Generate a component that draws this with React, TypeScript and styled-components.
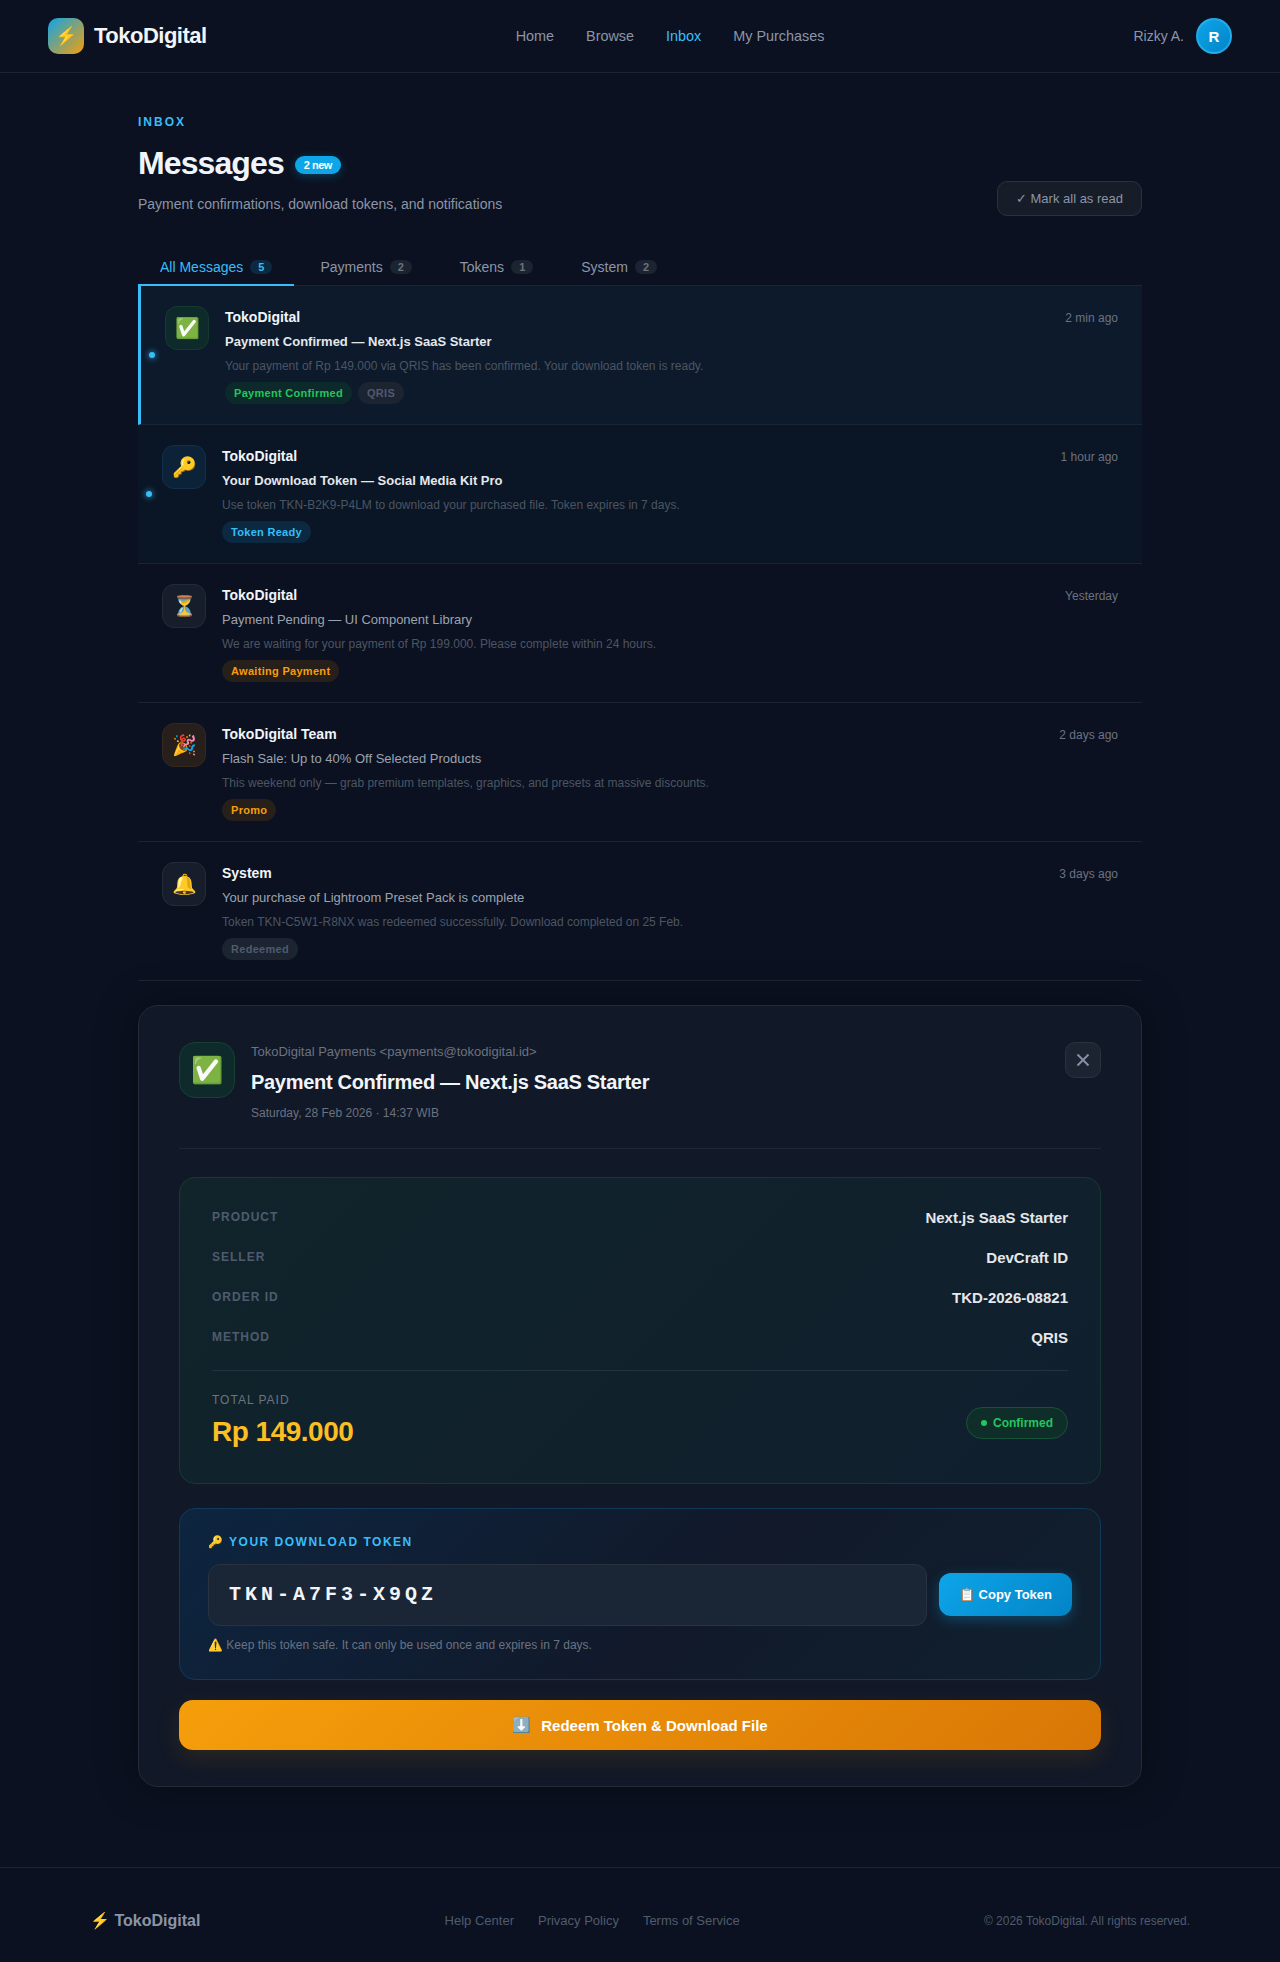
import React from "react";
import styled, { createGlobalStyle } from "styled-components";

const GlobalStyle = createGlobalStyle`
  * { box-sizing: border-box; }
  html, body { margin: 0; padding: 0; background: #0b1120; }
  body { font-family: "Liberation Sans", Arial, sans-serif; color: #f1f5f9; }
`;

const Page = styled.div`
  min-height: 1962px;
  background: #0b1120;
`;

const Nav = styled.nav`
  height: 73px;
  padding: 0 48px;
  display: flex;
  align-items: center;
  justify-content: space-between;
  border-bottom: 1px solid #1c2331;
`;

const Brand = styled.div`
  display: flex;
  align-items: center;
  gap: 10px;
  font-size: 22px;
  font-weight: 700;
  letter-spacing: -0.5px;
  color: #f1f5f9;
`;

const LogoMark = styled.div`
  width: 36px;
  height: 36px;
  border-radius: 10px;
  background: linear-gradient(135deg, #0ea5e9, #f59e0b);
  display: flex;
  align-items: center;
  justify-content: center;
  font-size: 18px;
`;

const NavLinks = styled.div`
  display: flex;
  gap: 32px;
`;

const NavLink = styled.a<{ $active?: boolean }>`
  font-size: 14.4px;
  color: ${({ $active }) => ($active ? "#38bdf8" : "#8b95a7")};
`;

const UserBox = styled.div`
  display: flex;
  align-items: center;
  gap: 12px;
  font-size: 14px;
  color: #8b95a7;
`;

const Avatar = styled.div`
  width: 36px;
  height: 36px;
  border-radius: 50%;
  background: linear-gradient(135deg, #0ea5e9, #0284c7);
  border: 2px solid rgba(56, 189, 248, 0.55);
  color: #fff;
  display: flex;
  align-items: center;
  justify-content: center;
  font-size: 15px;
  font-weight: 700;
`;

const Main = styled.main`
  width: 1004px;
  margin: 0 auto;
  padding-top: 42px;
`;

const Eyebrow = styled.div`
  font-size: 12px;
  line-height: 14px;
  font-weight: 700;
  letter-spacing: 2px;
  color: #38bdf8;
`;

const HeaderRow = styled.div`
  display: flex;
  align-items: flex-end;
  justify-content: space-between;
  margin-top: 14px;
`;

const TitleRow = styled.div`
  display: flex;
  align-items: center;
  gap: 11px;
`;

const Title = styled.h1`
  margin: 0;
  font-size: 32px;
  line-height: 41px;
  font-weight: 700;
  letter-spacing: -0.9px;
  color: #f1f5f9;
`;

const NewBadge = styled.span`
  height: 18px;
  padding: 0 9px;
  border-radius: 10px;
  background: #0ea5e9;
  box-shadow: 0 2px 10px rgba(14, 165, 233, 0.3);
  color: #fff;
  font-size: 11px;
  line-height: 18px;
  font-weight: 700;
  letter-spacing: -0.5px;
  margin-top: 3px;
`;

const Subtitle = styled.p`
  margin: 10px 0 0;
  font-size: 14px;
  line-height: 20px;
  color: #8b95a7;
`;

const MarkButton = styled.button`
  height: 35px;
  padding: 0 18px;
  border-radius: 10px;
  border: 1px solid #2a3240;
  background: #161c28;
  color: #8b95a7;
  font-family: inherit;
  font-size: 13px;
  margin-bottom: -2px;
`;

const Tabs = styled.div`
  display: flex;
  gap: 4px;
  margin-top: 33px;
  border-bottom: 1px solid #1c2331;
  height: 39px;
`;

const Tab = styled.div<{ $active?: boolean }>`
  height: 39px;
  padding: 2px 22px 0;
  display: flex;
  align-items: center;
  gap: 7px;
  font-size: 14px;
  color: ${({ $active }) => ($active ? "#38bdf8" : "#8b95a7")};
  border-bottom: 2px solid ${({ $active }) => ($active ? "#38bdf8" : "transparent")};
`;

const TabCount = styled.span<{ $active?: boolean }>`
  height: 14px;
  padding: 0 8px;
  border-radius: 10px;
  font-size: 11px;
  line-height: 14px;
  font-weight: 700;
  color: ${({ $active }) => ($active ? "#38bdf8" : "#6b7280")};
  background: ${({ $active }) => ($active ? "#0b2a42" : "#1c2331")};
`;

const Item = styled.div<{ $selected?: boolean; $unread?: boolean }>`
  position: relative;
  height: 139px;
  display: flex;
  gap: 16px;
  padding: 20px 24px;
  border-bottom: 1px solid #1c2331;
  border-left: ${({ $selected }) => ($selected ? "3px solid #38bdf8" : "none")};
  background: ${({ $selected, $unread }) =>
    $selected ? "#0c1a2c" : $unread ? "#0a1525" : "transparent"};
`;

const UnreadDot = styled.span`
  position: absolute;
  left: 8px;
  top: 50%;
  width: 6px;
  height: 6px;
  margin-top: -3px;
  border-radius: 50%;
  background: #38bdf8;
  box-shadow: 0 0 6px #38bdf8;
`;

const tones: Record<string, { bg: string; border: string }> = {
  green: { bg: "#0f2a2a", border: "#153a30" },
  blue: { bg: "#0c2238", border: "#12304a" },
  amber: { bg: "#261f1c", border: "#33291f" },
  gray: { bg: "#161d2b", border: "#232b3a" },
};

const IconBox = styled.div<{ $tone: string }>`
  flex: none;
  width: 44px;
  height: 44px;
  border-radius: 12px;
  display: flex;
  align-items: center;
  justify-content: center;
  font-size: 20px;
  background: ${({ $tone }) => tones[$tone].bg};
  border: 1px solid ${({ $tone }) => tones[$tone].border};
`;

const ItemBody = styled.div`
  flex: 1;
  min-width: 0;
`;

const ItemTop = styled.div`
  display: flex;
  justify-content: space-between;
  align-items: center;
  margin-top: 3px;
`;

const Sender = styled.div`
  font-size: 14px;
  line-height: 17px;
  font-weight: 700;
  color: #f1f5f9;
`;

const Time = styled.div`
  font-size: 12px;
  color: #6b7280;
`;

const Subject = styled.div<{ $bold?: boolean }>`
  margin-top: 8px;
  font-size: 13px;
  line-height: 16px;
  font-weight: ${({ $bold }) => ($bold ? 700 : 400)};
  color: ${({ $bold }) => ($bold ? "#e5e7eb" : "#9ca3af")};
`;

const Preview = styled.div`
  margin-top: 9px;
  font-size: 12px;
  line-height: 14px;
  color: #4b5563;
`;

const Tags = styled.div`
  display: flex;
  gap: 6px;
  margin-top: 9px;
`;

const tagTones: Record<string, { bg: string; color: string }> = {
  green: { bg: "#0d2a2a", color: "#22c55e" },
  blue: { bg: "#0b2a42", color: "#38bdf8" },
  amber: { bg: "#271f1a", color: "#f59e0b" },
  gray: { bg: "#1c2331", color: "#4f5b6e" },
};

const Tag = styled.span<{ $tone: string }>`
  height: 22px;
  padding: 0 9px;
  border-radius: 11px;
  font-size: 11px;
  line-height: 22px;
  font-weight: 700;
  letter-spacing: 0.3px;
  background: ${({ $tone }) => tagTones[$tone].bg};
  color: ${({ $tone }) => tagTones[$tone].color};
`;

const Detail = styled.section`
  margin-top: 24px;
  padding: 36px 40px;
  border-radius: 20px;
  border: 1px solid #232b3a;
  background: #111827;
  box-shadow: 0 0 40px rgba(0, 0, 0, 0.35);
`;

const DetailHead = styled.div`
  display: flex;
  gap: 16px;
  padding-bottom: 28px;
  border-bottom: 1px solid #1f2736;
`;

const DetailIcon = styled.div`
  flex: none;
  width: 56px;
  height: 56px;
  border-radius: 16px;
  display: flex;
  align-items: center;
  justify-content: center;
  font-size: 26px;
  background: #0f2a2a;
  border: 1px solid #154133;
`;

const DetailInfo = styled.div`
  flex: 1;
  padding-top: 2px;
`;

const DetailFrom = styled.div`
  font-size: 13px;
  line-height: 16px;
  color: #6b7280;
`;

const DetailTitle = styled.h2`
  margin: 10px 0 0;
  font-size: 20px;
  line-height: 24px;
  font-weight: 700;
  letter-spacing: -0.3px;
  color: #f1f5f9;
`;

const DetailDate = styled.div`
  margin-top: 12px;
  font-size: 12px;
  line-height: 14px;
  color: #6b7280;
`;

const CloseButton = styled.button`
  flex: none;
  width: 36px;
  height: 36px;
  border-radius: 10px;
  border: 1px solid #2a3240;
  background: #1c2331;
  color: #8590a2;
  display: flex;
  align-items: center;
  justify-content: center;
  padding: 0;
`;

const Summary = styled.div`
  margin-top: 28px;
  height: 307px;
  padding: 31px 32px;
  border-radius: 16px;
  border: 1px solid #163a33;
  background: linear-gradient(135deg, #10242a, #101f2e);
`;

const SummaryRow = styled.div`
  display: flex;
  justify-content: space-between;
  align-items: flex-start;
  height: 40px;
`;

const RowLabel = styled.div`
  font-size: 12px;
  line-height: 14px;
  font-weight: 700;
  letter-spacing: 1px;
  color: #4f5b6e;
  margin-top: 1px;
`;

const RowValue = styled.div`
  font-size: 15px;
  line-height: 18px;
  font-weight: 700;
  color: #e5e7eb;
`;

const TotalRow = styled.div`
  display: flex;
  justify-content: space-between;
  align-items: center;
  margin-top: 1px;
  padding-top: 22px;
  border-top: 1px solid #1f3440;
`;

const TotalLabel = styled.div`
  font-size: 12px;
  line-height: 14px;
  letter-spacing: 1px;
  font-weight: 400;
  color: #6b7280;
`;

const TotalValue = styled.div`
  margin-top: 8px;
  font-size: 28px;
  line-height: 34px;
  font-weight: 700;
  letter-spacing: -0.5px;
  color: #fbbf24;
`;

const ConfirmedPill = styled.div`
  height: 32px;
  margin-top: 3px;
  padding: 0 14px;
  border-radius: 16px;
  border: 1px solid #165238;
  background: #0f2e2a;
  color: #22c55e;
  display: flex;
  align-items: center;
  gap: 6px;
  font-size: 12px;
  font-weight: 700;
`;

const PillDot = styled.span`
  width: 6px;
  height: 6px;
  border-radius: 50%;
  background: #22c55e;
`;

const TokenCard = styled.div`
  margin-top: 24px;
  height: 172px;
  padding: 26px 28px;
  border-radius: 16px;
  border: 1px solid #10395a;
  background: linear-gradient(135deg, #0d2540, #11192a 55%, #10202e);
`;

const TokenLabel = styled.div`
  font-size: 12px;
  line-height: 14px;
  font-weight: 700;
  letter-spacing: 1.5px;
  color: #38bdf8;
`;

const TokenRow = styled.div`
  display: flex;
  align-items: center;
  gap: 12px;
  margin-top: 15px;
`;

const TokenField = styled.div`
  flex: 1;
  height: 62px;
  padding: 0 20px 2px;
  border-radius: 12px;
  border: 1px solid #2a3240;
  background: #1a2536;
  display: flex;
  align-items: center;
  font-family: "Liberation Mono", monospace;
  font-size: 20px;
  font-weight: 700;
  letter-spacing: 4px;
  color: #f1f5f9;
`;

const CopyButton = styled.button`
  flex: none;
  width: 133px;
  height: 43px;
  margin-bottom: 1px;
  border: none;
  border-radius: 12px;
  background: linear-gradient(135deg, #0ea5e9, #0284c7);
  box-shadow: 0 4px 14px rgba(14, 165, 233, 0.3);
  color: #fff;
  font-family: inherit;
  font-size: 13px;
  font-weight: 700;
`;

const TokenNote = styled.div`
  margin-top: 12px;
  font-size: 12px;
  line-height: 14px;
  color: #6b7280;
`;

const RedeemButton = styled.button`
  display: flex;
  align-items: center;
  justify-content: center;
  gap: 10px;
  width: 100%;
  height: 50px;
  margin-top: 20px;
  border: none;
  border-radius: 14px;
  background: linear-gradient(135deg, #f59e0b, #d97706);
  box-shadow: 0 8px 24px rgba(245, 158, 11, 0.12);
  color: #fff;
  font-family: inherit;
  font-size: 15px;
  font-weight: 700;
`;

const Footer = styled.footer`
  margin-top: 80px;
  border-top: 1px solid #1c2331;
`;

const FooterInner = styled.div`
  width: 1100px;
  margin: 0 auto;
  padding-top: 43px;
  display: flex;
  align-items: center;
  justify-content: space-between;
`;

const FooterBrand = styled.div`
  font-size: 16px;
  font-weight: 700;
  color: #8b95a7;
`;

const FooterLinks = styled.div`
  display: flex;
  gap: 24px;
  font-size: 13px;
  color: #4f5b6e;
`;

const Copyright = styled.div`
  font-size: 12px;
  color: #4f5b6e;
`;

const messages = [
  {
    icon: "✅", tone: "green", sender: "TokoDigital", time: "2 min ago", selected: true, unread: true,
    subject: "Payment Confirmed — Next.js SaaS Starter",
    preview: "Your payment of Rp 149.000 via QRIS has been confirmed. Your download token is ready.",
    tags: [["Payment Confirmed", "green"], ["QRIS", "gray"]],
  },
  {
    icon: "🔑", tone: "blue", sender: "TokoDigital", time: "1 hour ago", unread: true,
    subject: "Your Download Token — Social Media Kit Pro",
    preview: "Use token TKN-B2K9-P4LM to download your purchased file. Token expires in 7 days.",
    tags: [["Token Ready", "blue"]],
  },
  {
    icon: "⏳", tone: "gray", sender: "TokoDigital", time: "Yesterday",
    subject: "Payment Pending — UI Component Library",
    preview: "We are waiting for your payment of Rp 199.000. Please complete within 24 hours.",
    tags: [["Awaiting Payment", "amber"]],
  },
  {
    icon: "🎉", tone: "amber", sender: "TokoDigital Team", time: "2 days ago",
    subject: "Flash Sale: Up to 40% Off Selected Products",
    preview: "This weekend only — grab premium templates, graphics, and presets at massive discounts.",
    tags: [["Promo", "amber"]],
  },
  {
    icon: "🔔", tone: "gray", sender: "System", time: "3 days ago",
    subject: "Your purchase of Lightroom Preset Pack is complete",
    preview: "Token TKN-C5W1-R8NX was redeemed successfully. Download completed on 25 Feb.",
    tags: [["Redeemed", "gray"]],
  },
];

const summaryRows = [
  ["PRODUCT", "Next.js SaaS Starter"],
  ["SELLER", "DevCraft ID"],
  ["ORDER ID", "TKD-2026-08821"],
  ["METHOD", "QRIS"],
];

const tabs = [
  ["All Messages", "5"],
  ["Payments", "2"],
  ["Tokens", "1"],
  ["System", "2"],
];

export default function App() {
  return (
    <Page>
      <GlobalStyle />
      <Nav>
        <Brand>
          <LogoMark>⚡</LogoMark>
          TokoDigital
        </Brand>
        <NavLinks>
          <NavLink>Home</NavLink>
          <NavLink>Browse</NavLink>
          <NavLink $active>Inbox</NavLink>
          <NavLink>My Purchases</NavLink>
        </NavLinks>
        <UserBox>
          Rizky A.
          <Avatar>R</Avatar>
        </UserBox>
      </Nav>

      <Main>
        <Eyebrow>INBOX</Eyebrow>
        <HeaderRow>
          <div>
            <TitleRow>
              <Title>Messages</Title>
              <NewBadge>2 new</NewBadge>
            </TitleRow>
            <Subtitle>Payment confirmations, download tokens, and notifications</Subtitle>
          </div>
          <MarkButton>✓ Mark all as read</MarkButton>
        </HeaderRow>

        <Tabs>
          {tabs.map(([label, count], i) => (
            <Tab key={label} $active={i === 0}>
              {label}
              <TabCount $active={i === 0}>{count}</TabCount>
            </Tab>
          ))}
        </Tabs>

        {messages.map((m) => (
          <Item key={m.subject} $selected={m.selected} $unread={m.unread}>
            {m.unread && <UnreadDot />}
            <IconBox $tone={m.tone}>{m.icon}</IconBox>
            <ItemBody>
              <ItemTop>
                <Sender>{m.sender}</Sender>
                <Time>{m.time}</Time>
              </ItemTop>
              <Subject $bold={m.unread}>{m.subject}</Subject>
              <Preview>{m.preview}</Preview>
              <Tags>
                {m.tags.map(([label, tone]) => (
                  <Tag key={label} $tone={tone}>{label}</Tag>
                ))}
              </Tags>
            </ItemBody>
          </Item>
        ))}

        <Detail>
          <DetailHead>
            <DetailIcon>✅</DetailIcon>
            <DetailInfo>
              <DetailFrom>TokoDigital Payments &lt;payments@tokodigital.id&gt;</DetailFrom>
              <DetailTitle>Payment Confirmed — Next.js SaaS Starter</DetailTitle>
              <DetailDate>Saturday, 28 Feb 2026 · 14:37 WIB</DetailDate>
            </DetailInfo>
            <CloseButton aria-label="Close">
              <svg width="16" height="16" viewBox="0 0 16 16" fill="none" stroke="currentColor" strokeWidth="2">
                <path d="M2.5 2.5l11 11M13.5 2.5l-11 11" />
              </svg>
            </CloseButton>
          </DetailHead>

          <Summary>
            {summaryRows.map(([label, value]) => (
              <SummaryRow key={label}>
                <RowLabel>{label}</RowLabel>
                <RowValue>{value}</RowValue>
              </SummaryRow>
            ))}
            <TotalRow>
              <div>
                <TotalLabel>TOTAL PAID</TotalLabel>
                <TotalValue>Rp 149.000</TotalValue>
              </div>
              <ConfirmedPill>
                <PillDot />
                Confirmed
              </ConfirmedPill>
            </TotalRow>
          </Summary>

          <TokenCard>
            <TokenLabel>🔑 YOUR DOWNLOAD TOKEN</TokenLabel>
            <TokenRow>
              <TokenField>TKN-A7F3-X9QZ</TokenField>
              <CopyButton>📋 Copy Token</CopyButton>
            </TokenRow>
            <TokenNote>⚠️ Keep this token safe. It can only be used once and expires in 7 days.</TokenNote>
          </TokenCard>

          <RedeemButton>
            <span>⬇️</span>
            Redeem Token &amp; Download File
          </RedeemButton>
        </Detail>
      </Main>

      <Footer>
        <FooterInner>
          <FooterBrand>⚡ TokoDigital</FooterBrand>
          <FooterLinks>
            <span>Help Center</span>
            <span>Privacy Policy</span>
            <span>Terms of Service</span>
          </FooterLinks>
          <Copyright>© 2026 TokoDigital. All rights reserved.</Copyright>
        </FooterInner>
      </Footer>
    </Page>
  );
}
